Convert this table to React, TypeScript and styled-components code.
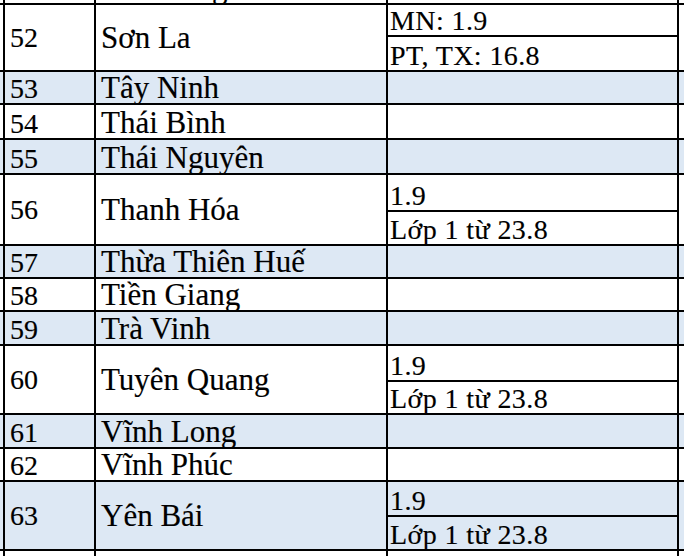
import React from 'react'
import styled, { createGlobalStyle } from 'styled-components'

const GlobalStyle = createGlobalStyle`
	html, body {
		margin: 0;
		padding: 0;
		background: #fff;
	}
`

type Row = {
	no: number
	name: string
	h: number[]
	values?: string[]
	band?: boolean
}

const rows: Row[] = [
	{ no: 51, name: 'Sóc Trăng', h: [33] },
	{ no: 52, name: 'Sơn La', h: [32, 35], values: ['MN: 1.9', 'PT, TX: 16.8'] },
	{ no: 53, name: 'Tây Ninh', h: [33], band: true },
	{ no: 54, name: 'Thái Bình', h: [35] },
	{ no: 55, name: 'Thái Nguyên', h: [35], band: true },
	{ no: 56, name: 'Thanh Hóa', h: [37, 34], values: ['1.9', 'Lớp 1 từ 23.8'] },
	{ no: 57, name: 'Thừa Thiên Huế', h: [33], band: true },
	{ no: 58, name: 'Tiền Giang', h: [31] },
	{ no: 59, name: 'Trà Vinh', h: [34], band: true },
	{ no: 60, name: 'Tuyên Quang', h: [36, 33], values: ['1.9', 'Lớp 1 từ 23.8'] },
	{ no: 61, name: 'Vĩnh Long', h: [34], band: true },
	{ no: 62, name: 'Vĩnh Phúc', h: [33] },
	{ no: 63, name: 'Yên Bái', h: [35, 34], values: ['1.9', 'Lớp 1 từ 23.8'], band: true },
]

// the sheet is scrolled: only the bottom edge of row 51 shows
const Viewport = styled.div`
	width: 684px;
	height: 556px;
	overflow: hidden;
`

const Sheet = styled.table`
	border-collapse: collapse;
	table-layout: fixed;
	width: 688px;
	margin-top: -30px;
`

const Tr = styled.tr<{ $h: number; $band?: boolean }>`
	height: ${p => p.$h}px;
	background: ${p => (p.$band ? '#dde8f4' : '#fff')};
`

const Cell = styled.td`
	border: 2px solid #000;
	padding: 0;
	font-family: "Liberation Serif", "Times New Roman", serif;
	color: #000;
	-webkit-text-stroke: 0.15px #000;
	line-height: 1;
	vertical-align: bottom;
	white-space: nowrap;
	overflow: hidden;
`

const Edge = styled(Cell)<{ $side: 'left' | 'right' }>`
	${p => (p.$side === 'left' ? 'border-left: none;' : 'border-right: none;')}
`

const No = styled(Cell)<{ $mid?: boolean }>`
	font-size: 28px;
	padding-left: 5px;
	vertical-align: ${p => (p.$mid ? 'middle' : 'bottom')};
`

const Name = styled(Cell)<{ $mid?: boolean }>`
	font-size: 31px;
	padding-left: 5px;
	vertical-align: ${p => (p.$mid ? 'middle' : 'bottom')};
`

const Value = styled(Cell)`
	font-size: 28px;
	letter-spacing: 0.4px;
	padding-left: 2px;
`

const SheetRows = ({ row }: { row: Row }) => {
	if (!row.values) {
		return (
			<Tr $h={row.h[0]} $band={row.band}>
				<Edge $side='left' />
				<No>{row.no}</No>
				<Name>{row.name}</Name>
				<Value />
				<Edge $side='right' />
			</Tr>
		)
	}
	return (
		<>
			<Tr $h={row.h[0]} $band={row.band}>
				<Edge $side='left' rowSpan={2} />
				<No $mid rowSpan={2}>{row.no}</No>
				<Name $mid rowSpan={2}>{row.name}</Name>
				<Value>{row.values[0]}</Value>
				<Edge $side='right' rowSpan={2} />
			</Tr>
			<Tr $h={row.h[1]} $band={row.band}>
				<Value>{row.values[1]}</Value>
			</Tr>
		</>
	)
}

export default function App() {
	return (
		<Viewport>
			<GlobalStyle />
			<Sheet>
				<colgroup>
					<col style={{ width: 4 }} />
					<col style={{ width: 91 }} />
					<col style={{ width: 292 }} />
					<col style={{ width: 291 }} />
					<col style={{ width: 10 }} />
				</colgroup>
				<tbody>
					{rows.map(r => (
						<SheetRows key={r.no} row={r} />
					))}
					<Tr $h={40}>
						<Edge $side='left' />
						<No />
						<Name />
						<Value />
						<Edge $side='right' />
					</Tr>
				</tbody>
			</Sheet>
		</Viewport>
	)
}
